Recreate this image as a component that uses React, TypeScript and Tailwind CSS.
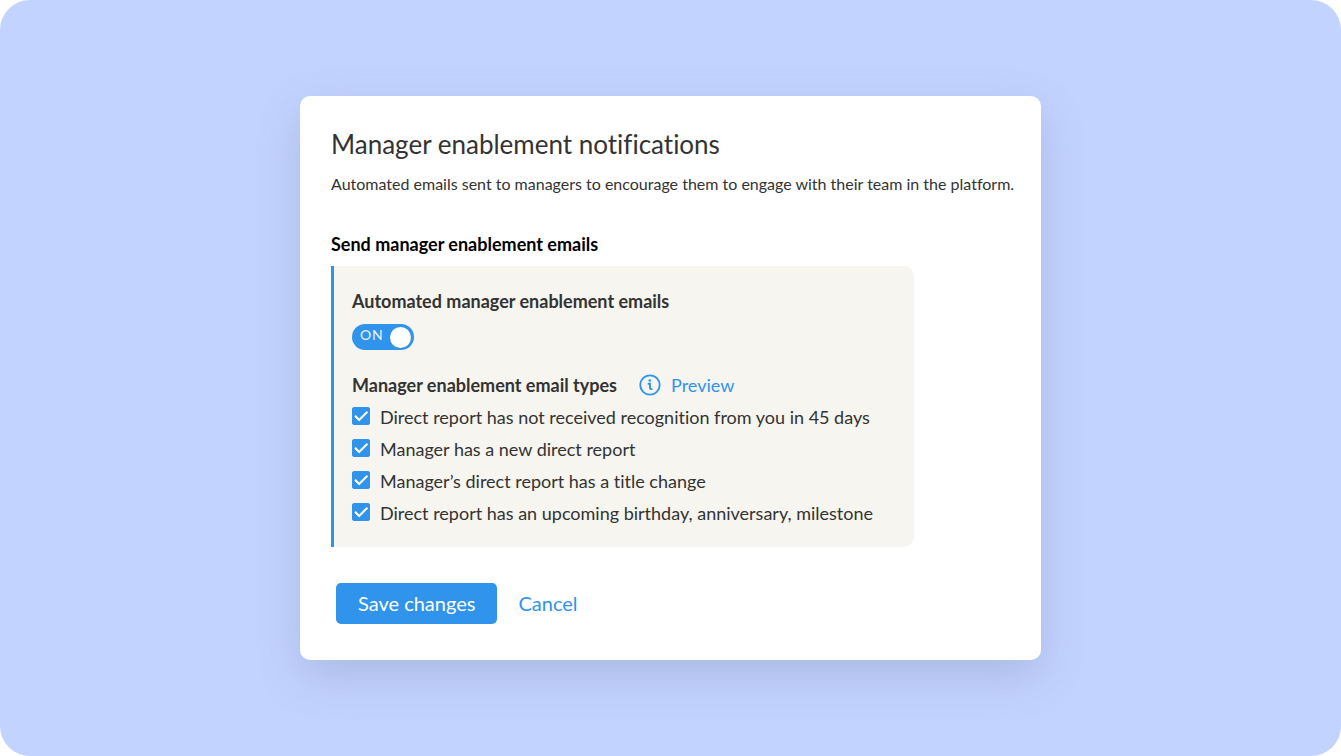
import React, { useState } from 'react';

interface EmailType {
  id: string;
  label: string;
  enabled: boolean;
}

const initialEmailTypes: EmailType[] = [
  { id: 'no-recognition', label: 'Direct report has not received recognition from you in 45 days', enabled: true },
  { id: 'new-report', label: 'Manager has a new direct report', enabled: true },
  { id: 'title-change', label: 'Manager’s direct report has a title change', enabled: true },
  { id: 'milestone', label: 'Direct report has an upcoming birthday, anniversary, milestone', enabled: true },
];

interface ToggleProps {
  checked: boolean;
  onChange: (checked: boolean) => void;
  labelledBy: string;
}

function Toggle({ checked, onChange, labelledBy }: ToggleProps) {
  return (
    <button
      type="button"
      role="switch"
      aria-checked={checked}
      aria-labelledby={labelledBy}
      onClick={() => onChange(!checked)}
      className={`flex h-[26px] w-[62px] items-center justify-between rounded-full pr-[3px] pl-2 text-white ${
        checked ? 'bg-[#3093ec]' : 'flex-row-reverse bg-gray-400'
      }`}
    >
      <span className="pb-1 text-sm leading-5 tracking-wider text-white/90">{checked ? 'ON' : 'OFF'}</span>
      <span className="size-[21px] rounded-full bg-white" />
    </button>
  );
}

interface CheckboxRowProps {
  item: EmailType;
  onToggle: (id: string) => void;
}

function CheckboxRow({ item, onToggle }: CheckboxRowProps) {
  return (
    <li className="flex h-8 items-center gap-2.5">
      <span className="relative mb-[3px] size-[18px] shrink-0">
        <input
          type="checkbox"
          id={item.id}
          checked={item.enabled}
          onChange={() => onToggle(item.id)}
          className="block size-[18px] appearance-none rounded-xs border border-[#3093ec] bg-white checked:bg-[#3093ec]"
        />
        {item.enabled && (
          <svg viewBox="0 0 18 18" fill="none" className="pointer-events-none absolute inset-0 size-[18px]">
            <path d="M3 8.8l4.1 4.1 8.3-8.2" stroke="white" strokeWidth="2.1" />
          </svg>
        )}
      </span>
      <label htmlFor={item.id}>{item.label}</label>
    </li>
  );
}

function InfoIcon() {
  return (
    <svg viewBox="0 0 22 22" fill="none" className="size-[22px]" aria-hidden="true">
      <circle cx="11" cy="11" r="9.7" stroke="currentColor" strokeWidth="1.8" />
      <circle cx="10.8" cy="6.5" r="1.3" fill="currentColor" />
      <path d="M8.7 9.7h2.3v4.3q0 1.1 1 1.1h1.4" stroke="currentColor" strokeWidth="1.9" />
    </svg>
  );
}

export default function App() {
  const [automated, setAutomated] = useState(true);
  const [emailTypes, setEmailTypes] = useState(initialEmailTypes);

  const toggleEmailType = (id: string) => {
    setEmailTypes((types) => types.map((t) => (t.id === id ? { ...t, enabled: !t.enabled } : t)));
  };

  const handleCancel = () => {
    setAutomated(true);
    setEmailTypes(initialEmailTypes);
  };

  return (
    <main className="flex min-h-screen items-center justify-center rounded-[30px] bg-[#c3d3ff] px-4 py-8 font-['Lato',sans-serif] text-[#333333] [font-variant-ligatures:none]">
      <form
        onSubmit={(e) => e.preventDefault()}
        className="w-full max-w-[741px] rounded-[10px] bg-white pt-8 pr-5 pb-9 pl-[31px] shadow-[0_16px_44px_rgba(80,100,130,0.22)]"
      >
        <h1 className="text-[26px] leading-8">Manager enablement notifications</h1>
        <p className="mt-3 text-base leading-6">
          Automated emails sent to managers to encourage them to engage with their team in the platform.
        </p>

        <h2 className="mt-[34px] text-lg leading-7 font-bold text-black">Send manager enablement emails</h2>

        {/* Email settings */}
        <section className="mt-2 max-w-[583px] rounded-r-[10px] border-l-[3px] border-[#3093ec] bg-[#f6f5f0] px-[18px] pt-[21px] pb-[18px] text-lg leading-7">
          <h3 id="automated-label" className="mb-[9px] font-bold">
            Automated manager enablement emails
          </h3>
          <Toggle checked={automated} onChange={setAutomated} labelledBy="automated-label" />

          <div className="mt-[21px] flex items-center">
            <h3 className="font-bold">Manager enablement email types</h3>
            <a href="#preview" className="ml-[22px] flex items-center gap-2.5 text-[#3093ec]">
              <InfoIcon />
              Preview
            </a>
          </div>
          <ul className="mt-[2px]">
            {emailTypes.map((item) => (
              <CheckboxRow key={item.id} item={item} onToggle={toggleEmailType} />
            ))}
          </ul>
        </section>

        <div className="mt-9 ml-[5px] flex items-center gap-[21px] text-xl leading-[41px]">
          <button type="submit" className="rounded-[5px] bg-[#3093ec] px-[22px] text-white">
            Save changes
          </button>
          <button type="button" onClick={handleCancel} className="text-[#3093ec]">
            Cancel
          </button>
        </div>
      </form>
    </main>
  );
}
